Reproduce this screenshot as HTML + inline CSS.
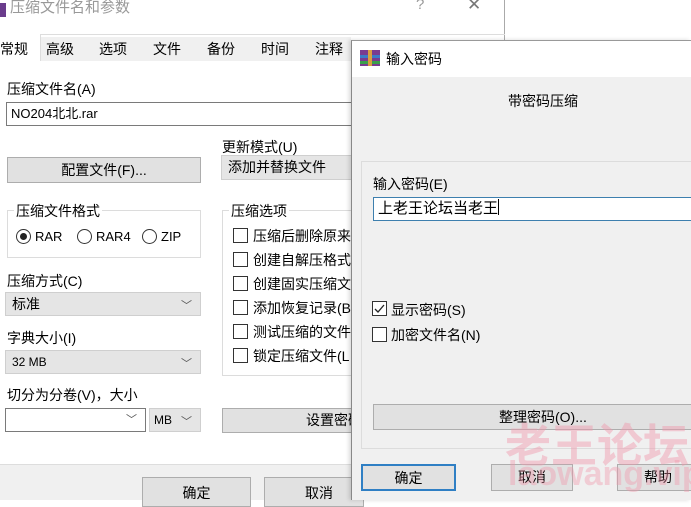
<!DOCTYPE html>
<html><head><meta charset="utf-8"><style>
*{box-sizing:border-box;margin:0;padding:0}
body{width:691px;height:500px;overflow:hidden;position:relative;background:#fff;font-family:"Liberation Sans","Noto Sans CJK SC",sans-serif;font-size:13px;color:#000}
.a{position:absolute}
.btn{position:absolute;background:#e1e1e1;border:1px solid #adadad;text-align:center;font-size:14px;white-space:nowrap;overflow:hidden}
.in{position:absolute;background:#fff;border:1px solid #7a7a7a;font-size:13px;padding-left:4px;white-space:nowrap;overflow:hidden}
.cb{position:absolute;background:#e5e5e5;border:1px solid #cfcfcf;font-size:13px;padding-left:6px;white-space:nowrap}
.chk{position:absolute;width:15px;height:15px;border:1px solid #333;background:#fff}
.lbl{position:absolute;font-size:14px;white-space:nowrap}
.dd{position:absolute;right:8px;top:2px;color:#555;font-size:11px}
.grp{position:absolute;border:1px solid #dcdcdc}
</style></head><body>
<div class="a" style="left:0;top:0;width:505px;height:500px;background:#fff;border-right:1px solid #aaa"></div>
<div class="a" style="left:0;top:3px;width:6px;height:14px;background:#6a3c8c"></div>
<div class="lbl" style="left:10px;top:-4px;color:#999;font-size:15px">压缩文件名和参数</div>
<div class="lbl" style="left:416px;top:-4px;color:#999;font-size:15px">?</div>
<div class="lbl" style="left:467px;top:-5px;color:#777;font-size:17px">✕</div>
<div class="a" style="left:0;top:34px;width:505px;height:1px;background:#ddd"></div>
<div class="a" style="left:0;top:60px;width:505px;height:1px;background:#ddd"></div>
<div class="a" style="left:0;top:34px;width:41px;height:27px;background:#fff;border-right:1px solid #ddd"></div>
<div class="a" style="left:41px;top:37px;width:310px;height:24px;background:#f0f0f0"></div>
<div class="lbl" style="left:0;top:39px">常规</div>
<div class="lbl" style="left:46px;top:39px">高级</div>
<div class="lbl" style="left:99px;top:39px">选项</div>
<div class="lbl" style="left:153px;top:39px">文件</div>
<div class="lbl" style="left:207px;top:39px">备份</div>
<div class="lbl" style="left:261px;top:39px">时间</div>
<div class="lbl" style="left:315px;top:39px">注释</div>
<div class="lbl" style="left:7px;top:79px">压缩文件名(A)</div>
<div class="in" style="left:6px;top:102px;width:350px;height:24px;line-height:22px">NO204北北.rar</div>
<div class="lbl" style="left:222px;top:137px">更新模式(U)</div>
<div class="cb" style="left:221px;top:155px;width:135px;height:25px;line-height:23px;font-size:14px">添加并替换文件</div>
<div class="btn" style="left:7px;top:157px;width:194px;height:26px;line-height:24px">配置文件(F)...</div>
<div class="grp" style="left:7px;top:210px;width:194px;height:48px"></div>
<div class="lbl" style="left:14px;top:201px;background:#fff;padding:0 2px">压缩文件格式</div>
<div class="a" style="left:16px;top:229px;width:15px;height:15px;border:1px solid #333;border-radius:50%;background:#fff"><div class="a" style="left:3px;top:3px;width:7px;height:7px;border-radius:50%;background:#222"></div></div>
<div class="lbl" style="left:35px;top:229px;font-size:13px">RAR</div>
<div class="a" style="left:77px;top:229px;width:15px;height:15px;border:1px solid #333;border-radius:50%"></div>
<div class="lbl" style="left:96px;top:229px;font-size:13px">RAR4</div>
<div class="a" style="left:142px;top:229px;width:15px;height:15px;border:1px solid #333;border-radius:50%"></div>
<div class="lbl" style="left:161px;top:229px;font-size:13px">ZIP</div>
<div class="grp" style="left:222px;top:210px;width:140px;height:166px"></div>
<div class="lbl" style="left:229px;top:201px;background:#fff;padding:0 2px">压缩选项</div>
<div class="chk" style="left:233px;top:228px"></div><div class="lbl" style="left:253px;top:226px">压缩后删除原来</div>
<div class="chk" style="left:233px;top:252px"></div><div class="lbl" style="left:253px;top:250px">创建自解压格式</div>
<div class="chk" style="left:233px;top:276px"></div><div class="lbl" style="left:253px;top:274px">创建固实压缩文</div>
<div class="chk" style="left:233px;top:300px"></div><div class="lbl" style="left:253px;top:298px">添加恢复记录(B</div>
<div class="chk" style="left:233px;top:324px"></div><div class="lbl" style="left:253px;top:322px">测试压缩的文件</div>
<div class="chk" style="left:233px;top:348px"></div><div class="lbl" style="left:253px;top:346px">锁定压缩文件(L</div>
<div class="lbl" style="left:7px;top:271px">压缩方式(C)</div>
<div class="cb" style="left:5px;top:292px;width:196px;height:24px;line-height:22px;font-size:14px">标准<span class="dd">﹀</span></div>
<div class="lbl" style="left:7px;top:328px">字典大小(I)</div>
<div class="cb" style="left:5px;top:350px;width:196px;height:24px;line-height:22px;font-size:12px">32 MB<span class="dd">﹀</span></div>
<div class="lbl" style="left:7px;top:385px">切分为分卷(V)，大小</div>
<div class="in" style="left:5px;top:408px;width:141px;height:24px"><span class="dd">﹀</span></div>
<div class="cb" style="left:149px;top:408px;width:52px;height:24px;line-height:22px;font-size:12px;padding-left:4px">MB<span class="dd">﹀</span></div>
<div class="btn" style="left:222px;top:408px;width:140px;height:25px;line-height:23px;text-align:left;padding-left:83px">设置密码</div>
<div class="a" style="left:0;top:464px;width:505px;height:36px;background:#f0f0f0;border-top:1px solid #ddd"></div>
<div class="btn" style="left:142px;top:477px;width:109px;height:30px;line-height:30px">确定</div>
<div class="btn" style="left:264px;top:477px;width:100px;height:30px;line-height:30px;text-align:left;padding-left:40px">取消</div>
<!-- front dialog -->
<div class="a" style="left:351px;top:40px;width:340px;height:460px;background:#f0f0f0;border-left:1px solid #888;border-top:1px solid #999;box-shadow:-2px 0 4px rgba(0,0,0,.15)"></div>
<div class="a" style="left:352px;top:41px;width:339px;height:36px;background:#fff"></div>
<svg class="a" style="left:360px;top:50px" width="20" height="16"><rect x="0" y="0" width="20" height="16" fill="#7a3b8f"/><rect x="0" y="5" width="20" height="3" fill="#3a7bc8"/><rect x="0" y="11" width="20" height="3" fill="#3aa04a"/><rect x="8" y="0" width="4" height="16" fill="#d9a040"/></svg>
<div class="lbl" style="left:386px;top:49px">输入密码</div>
<div class="lbl" style="left:508px;top:91px">带密码压缩</div>
<div class="a" style="left:361px;top:161px;width:340px;height:288px;border:1px solid #dcdcdc"></div>
<div class="lbl" style="left:373px;top:174px">输入密码(E)</div>
<div class="in" style="left:373px;top:197px;width:330px;height:24px;line-height:21px;border-color:#3d7fae;font-size:15px">上老王论坛当老王<span style="display:inline-block;width:1px;height:16px;background:#000;vertical-align:-2px"></span></div>
<div class="chk" style="left:372px;top:301px;border-color:#333"><svg width="13" height="13" style="position:absolute;left:0;top:0"><path d="M2 7 L5 10 L11 3" stroke="#222" stroke-width="1.3" fill="none"/></svg></div>
<div class="lbl" style="left:391px;top:300px">显示密码(S)</div>
<div class="chk" style="left:372px;top:327px"></div>
<div class="lbl" style="left:391px;top:325px">加密文件名(N)</div>
<div class="btn" style="left:373px;top:404px;width:330px;height:26px;line-height:24px;text-align:left;padding-left:125px">整理密码(O)...</div>
<div class="btn" style="left:361px;top:464px;width:95px;height:27px;line-height:25px;border:2px solid #2f7fc4">确定</div>
<div class="btn" style="left:491px;top:464px;width:82px;height:27px;line-height:25px">取消</div>
<div class="btn" style="left:617px;top:464px;width:80px;height:27px;line-height:25px;text-align:left;padding-left:26px">帮助</div>
<div class="lbl" style="left:505px;top:410px;font-size:46px;font-weight:bold;color:rgba(240,150,170,.45)">老王论坛</div>
<div class="lbl" style="left:508px;top:455px;font-size:34px;font-weight:bold;color:rgba(240,150,170,.4)">laowang.vip</div>
</body></html>
